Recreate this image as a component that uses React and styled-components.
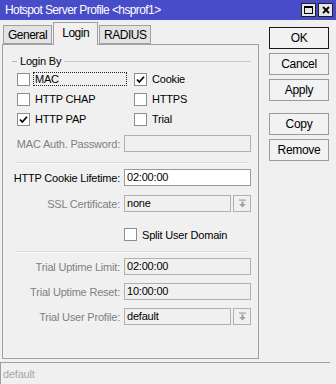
import React from 'react';
import styled, { createGlobalStyle } from 'styled-components';

const Global = createGlobalStyle`
	html, body {
		margin: 0;
		padding: 0;
		background: #f0f0f0;
	}
	body {
		font-family: "Liberation Sans", Arial, sans-serif;
		font-size: 11px;
		letter-spacing: -0.2px;
		color: #000;
	}
`

const Window = styled.div`
	width: 336px;
	height: 384px;
	display: flex;
	flex-direction: column;
	background: #f0f0f0;
	overflow: hidden;
`

const TitleBar = styled.div`
	height: 20px;
	flex: none;
	background: #484cc8;
	color: #fff;
	display: flex;
	align-items: center;
	padding: 0 3px 0 5px;
	box-sizing: border-box;
`

const Title = styled.span`
	flex: 1;
	font-size: 12px;
	letter-spacing: -0.6px;
	white-space: nowrap;
`

const TitleBtn = styled.div`
	width: 15px;
	height: 14px;
	border: 1px solid #202020;
	background: #e6e6e6;
	box-sizing: border-box;
	display: flex;
	align-items: center;
	justify-content: center;
	& + & {
		margin-left: 2px;
	}
`

const Main = styled.div`
	display: flex;
	height: 342px;
	flex: none;
`

const LeftCol = styled.div`
	width: 257px;
	padding: 1px 0 0 2px;
	display: flex;
	flex-direction: column;
`

const TabBar = styled.div`
	display: flex;
	align-items: flex-end;
	height: 23px;
	padding-left: 1px;
`

const Tab = styled.div`
	position: relative;
	z-index: ${p => (p.$active ? 1 : 0)};
	height: ${p => (p.$active ? '23px' : '19px')};
	margin-bottom: ${p => (p.$active ? '-1px' : '0')};
	padding: ${p => (p.$active ? '0 8px 2px' : '0 4px')};
	box-sizing: border-box;
	display: flex;
	align-items: center;
	font-size: 12px;
	letter-spacing: -0.5px;
	background: ${p => (p.$active ? '#f0f0f0' : '#e3e3e3')};
	border: 1px solid #a0a0a0;
	border-bottom: ${p => (p.$active ? 'none' : '1px solid #a0a0a0')};
	& + & {
		margin-left: 1px;
	}
`

const Panel = styled.div`
	height: 315px;
	border: 1px solid #a0a0a0;
	box-sizing: border-box;
	display: flex;
	flex-direction: column;
	padding: 0 7px 0 1px;
`

const GroupHeader = styled.div`
	display: flex;
	align-items: center;
	height: 14px;
	margin: 9px 0 0 8px;
	gap: 3px;
	&::before {
		content: '';
		width: 5px;
		border-top: 1px solid #b8b8b8;
	}
	&::after {
		content: '';
		flex: 1;
		border-top: 1px solid #c8c8c8;
	}
`

const CheckGrid = styled.div`
	display: grid;
	grid-template-columns: 117px 1fr;
	grid-auto-rows: 20px;
	margin: 1px 0 0 13px;
`

const CheckItem = styled.label`
	display: flex;
	align-items: center;
	gap: 3px;
`

const Box = styled.span`
	width: 13px;
	height: 13px;
	flex: none;
	box-sizing: border-box;
	border: 1px solid #8e8e8e;
	background: #fff;
	display: flex;
	align-items: center;
	justify-content: center;
`

const CheckText = styled.span`
	padding: 0 1px;
	line-height: 12px;
	border: 1px dotted ${p => (p.$focus ? '#222' : 'transparent')};
	flex: ${p => (p.$focus ? 1 : 'none')};
	margin-right: ${p => (p.$focus ? '7px' : '0')};
`

const FieldRow = styled.div`
	display: grid;
	grid-template-columns: 116px 1fr;
	gap: 4px;
	height: 17px;
	margin-top: ${p => p.$top}px;
`

const Label = styled.span`
	display: flex;
	justify-content: flex-end;
	align-items: center;
	min-width: 0;
	white-space: nowrap;
	color: ${p => (p.$dim ? '#7f7f7f' : '#000')};
`

const Input = styled.div`
	height: 17px;
	box-sizing: border-box;
	border: 1px solid ${p => (p.$disabled ? '#b0b0b0' : '#9a9a9a')};
	background: ${p => (p.$disabled ? '#f0f0f0' : '#fff')};
	padding-left: 2px;
	line-height: 15px;
	flex: 1;
`

const SelectWrap = styled.div`
	display: flex;
	gap: 2px;
`

const DropBtn = styled.div`
	width: 18px;
	height: 17px;
	box-sizing: border-box;
	border: 1px solid #b0b0b0;
	display: flex;
	align-items: center;
	justify-content: center;
`

const Separator = styled.div`
	margin: ${p => p.$top}px 2px 0 11px;
	border-top: 1px solid #d9d9d9;
	border-bottom: 1px solid #fbfbfb;
`

const RightCol = styled.div`
	width: 60px;
	margin-left: 10px;
	padding-top: 7px;
	display: flex;
	flex-direction: column;
	gap: 4px;
`

const Button = styled.div`
	height: 22px;
	box-sizing: border-box;
	border: 1px solid ${p => (p.$primary ? '#1a1a1a' : '#9a9a9a')};
	background: #f2f2f2;
	display: flex;
	align-items: center;
	justify-content: center;
	font-size: 12px;
	letter-spacing: -0.3px;
	margin-top: ${p => p.$gap || 0}px;
`

const StatusBar = styled.div`
	height: 22px;
	box-sizing: border-box;
	margin-right: 6px;
	border-top: 1px solid #a0a0a0;
	border-left: 1px solid #a0a0a0;
	color: #a8a8a8;
	display: flex;
	align-items: center;
	padding-left: 2px;
`

const Check = () => (
	<svg width="9" height="9" viewBox="0 0 9 9">
		<path d="M1 4.5 L3.3 7 L8 1.8" fill="none" stroke="#000" strokeWidth="1.7" />
	</svg>
)

const DropIcon = () => (
	<svg width="9" height="9" viewBox="0 0 9 9">
		<rect x="1" y="0.5" width="7" height="1.2" fill="#a0a0a0" />
		<rect x="3.5" y="2.5" width="2" height="3" fill="#a0a0a0" />
		<path d="M1.2 5 L7.8 5 L4.5 8.5 Z" fill="#a0a0a0" />
	</svg>
)

function CheckBox({ label, checked, focus }) {
	return (
		<CheckItem>
			<Box>{checked && <Check />}</Box>
			<CheckText $focus={focus}>{label}</CheckText>
		</CheckItem>
	)
}

function Field({ label, value, top, dim, disabled, select }) {
	return (
		<FieldRow $top={top}>
			<Label $dim={dim}>{label}</Label>
			{select ? (
				<SelectWrap>
					<Input $disabled={disabled}>{value}</Input>
					<DropBtn><DropIcon /></DropBtn>
				</SelectWrap>
			) : (
				<Input $disabled={disabled}>{value}</Input>
			)}
		</FieldRow>
	)
}

export default function App() {
	return (
		<Window>
			<Global />
			<TitleBar>
				<Title>Hotspot Server Profile &lt;hsprof1&gt;</Title>
				<TitleBtn>
					<svg width="9" height="8" viewBox="0 0 9 8">
						<rect x="0.5" y="0.5" width="8" height="7" fill="none" stroke="#000" />
						<rect x="0" y="0" width="9" height="2" fill="#000" />
					</svg>
				</TitleBtn>
				<TitleBtn>
					<svg width="8" height="8" viewBox="0 0 8 8">
						<path d="M1 1 L7 7 M7 1 L1 7" stroke="#000" strokeWidth="1.8" />
					</svg>
				</TitleBtn>
			</TitleBar>

			<Main>
				<LeftCol>
					<TabBar>
						<Tab>General</Tab>
						<Tab $active>Login</Tab>
						<Tab>RADIUS</Tab>
					</TabBar>
					<Panel>
						<GroupHeader>Login By</GroupHeader>
						<CheckGrid>
							<CheckBox label="MAC" focus />
							<CheckBox label="Cookie" checked />
							<CheckBox label="HTTP CHAP" />
							<CheckBox label="HTTPS" />
							<CheckBox label="HTTP PAP" checked />
							<CheckBox label="Trial" />
						</CheckGrid>

						<Field label="MAC Auth. Password:" top={6} dim disabled />
						<Separator $top={10} />
						<Field label="HTTP Cookie Lifetime:" value="02:00:00" top={5} />
						<Field label="SSL Certificate:" value="none" top={9} dim disabled select />

						<FieldRow $top={14}>
							<span />
							<CheckBox label="Split User Domain" />
						</FieldRow>
						<Separator $top={8} />

						<Field label="Trial Uptime Limit:" value="02:00:00" top={5} dim disabled />
						<Field label="Trial Uptime Reset:" value="10:00:00" top={8} dim disabled />
						<Field label="Trial User Profile:" value="default" top={8} dim disabled select />
					</Panel>
				</LeftCol>

				<RightCol>
					<Button $primary>OK</Button>
					<Button>Cancel</Button>
					<Button>Apply</Button>
					<Button $gap={8}>Copy</Button>
					<Button>Remove</Button>
				</RightCol>
			</Main>

			<StatusBar>default</StatusBar>
		</Window>
	);
}
